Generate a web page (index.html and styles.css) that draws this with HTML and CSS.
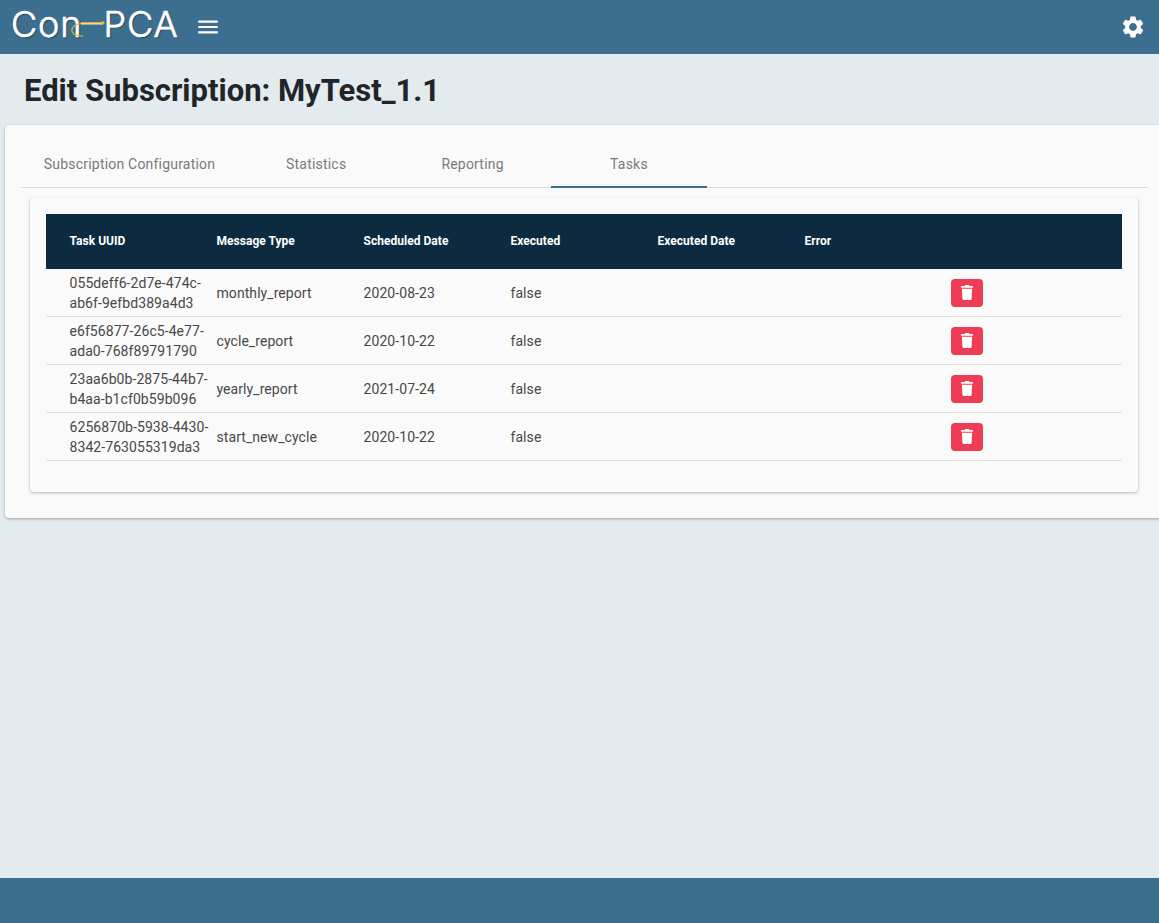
FILE: index.html
```html
<!DOCTYPE html>
<html lang="en">
<head>
    <meta charset="UTF-8">
    <meta name="viewport" content="width=device-width, initial-scale=1.0">
    <title>Edit Subscription</title>
    <link rel="stylesheet" href="styles.css">
</head>
<body>
    <header class="topbar">
        <div class="logo">
            <span class="logo-text">Con</span>
            <svg class="logo-link" width="36" height="36" viewBox="0 0 36 36" aria-hidden="true">
                <path d="M11 14.5H33" stroke="#f4eecb" stroke-width="2" fill="none"/>
                <path d="M11 13.7H33" stroke="#e6b422" stroke-width="1.3" fill="none"/>
                <circle cx="33" cy="13.7" r="1.6" fill="#e6b422"/>
                <path d="M11 14.5C4 15 0 20 3 24C5 27 9 27 13 27" stroke="#e6b422" stroke-width="1.2" fill="none"/>
            </svg>
            <span class="logo-text">PCA</span>
        </div>
        <button class="icon-btn menu-btn" aria-label="Menu">
            <svg width="26" height="26" viewBox="0 0 24 24"><path d="M3 18h18v-2H3v2zm0-5h18v-2H3v2zm0-7v2h18V6H3z"/></svg>
        </button>
        <button class="icon-btn settings-btn" aria-label="Settings">
            <svg width="26" height="26" viewBox="0 0 24 24"><path d="M19.14 12.94c.04-.3.06-.61.06-.94s-.02-.64-.07-.94l2.03-1.58a.49.49 0 0 0 .12-.61l-1.92-3.32a.488.488 0 0 0-.59-.22l-2.39.96c-.5-.38-1.03-.7-1.62-.94l-.36-2.54a.484.484 0 0 0-.48-.41h-3.84c-.24 0-.43.17-.47.41l-.36 2.54c-.59.24-1.13.57-1.62.94l-2.39-.96a.48.48 0 0 0-.59.22L2.74 8.87c-.12.21-.08.47.12.61l2.03 1.58c-.05.3-.09.63-.09.94s.02.64.07.94l-2.03 1.58a.49.49 0 0 0-.12.61l1.92 3.32c.12.22.37.29.59.22l2.39-.96c.5.38 1.03.7 1.62.94l.36 2.54c.05.24.24.41.48.41h3.84c.24 0 .44-.17.47-.41l.36-2.54c.59-.24 1.13-.56 1.62-.94l2.39.96c.22.08.47 0 .59-.22l1.92-3.32c.12-.22.07-.47-.12-.61l-2.01-1.58zM12 15.6c-1.98 0-3.6-1.62-3.6-3.6s1.62-3.6 3.6-3.6 3.6 1.62 3.6 3.6-1.62 3.6-3.6 3.6z"/></svg>
        </button>
    </header>

    <main class="content">
        <h1 class="page-title">Edit Subscription: MyTest_1.1</h1>

        <section class="card outer-card">
            <nav class="tabs">
                <div class="tab tab-wide">Subscription Configuration</div>
                <div class="tab">Statistics</div>
                <div class="tab">Reporting</div>
                <div class="tab tab-active">Tasks</div>
            </nav>

            <div class="card inner-card">
                <table class="task-table">
                    <thead>
                        <tr>
                            <th>Task UUID</th>
                            <th>Message Type</th>
                            <th>Scheduled Date</th>
                            <th>Executed</th>
                            <th>Executed Date</th>
                            <th>Error</th>
                            <th class="col-action"></th>
                        </tr>
                    </thead>
                    <tbody>
                        <tr>
                            <td><div class="uuid">055deff6-2d7e-474c-ab6f-9efbd389a4d3</div></td>
                            <td>monthly_report</td>
                            <td>2020-08-23</td>
                            <td>false</td>
                            <td></td>
                            <td></td>
                            <td class="col-action"><button class="delete-btn" aria-label="Delete"><svg width="12" height="15" viewBox="0 0 448 512" preserveAspectRatio="none"><path d="M432 32H312l-9.4-18.7A24 24 0 0 0 281.1 0H166.8a23.72 23.72 0 0 0-21.4 13.3L136 32H16A16 16 0 0 0 0 48v32a16 16 0 0 0 16 16h416a16 16 0 0 0 16-16V48a16 16 0 0 0-16-16zM53.2 467a48 48 0 0 0 47.9 45h245.8a48 48 0 0 0 47.9-45L416 128H32z"/></svg></button></td>
                        </tr>
                        <tr>
                            <td><div class="uuid">e6f56877-26c5-4e77-ada0-768f89791790</div></td>
                            <td>cycle_report</td>
                            <td>2020-10-22</td>
                            <td>false</td>
                            <td></td>
                            <td></td>
                            <td class="col-action"><button class="delete-btn" aria-label="Delete"><svg width="12" height="15" viewBox="0 0 448 512" preserveAspectRatio="none"><path d="M432 32H312l-9.4-18.7A24 24 0 0 0 281.1 0H166.8a23.72 23.72 0 0 0-21.4 13.3L136 32H16A16 16 0 0 0 0 48v32a16 16 0 0 0 16 16h416a16 16 0 0 0 16-16V48a16 16 0 0 0-16-16zM53.2 467a48 48 0 0 0 47.9 45h245.8a48 48 0 0 0 47.9-45L416 128H32z"/></svg></button></td>
                        </tr>
                        <tr>
                            <td><div class="uuid">23aa6b0b-2875-44b7-b4aa-b1cf0b59b096</div></td>
                            <td>yearly_report</td>
                            <td>2021-07-24</td>
                            <td>false</td>
                            <td></td>
                            <td></td>
                            <td class="col-action"><button class="delete-btn" aria-label="Delete"><svg width="12" height="15" viewBox="0 0 448 512" preserveAspectRatio="none"><path d="M432 32H312l-9.4-18.7A24 24 0 0 0 281.1 0H166.8a23.72 23.72 0 0 0-21.4 13.3L136 32H16A16 16 0 0 0 0 48v32a16 16 0 0 0 16 16h416a16 16 0 0 0 16-16V48a16 16 0 0 0-16-16zM53.2 467a48 48 0 0 0 47.9 45h245.8a48 48 0 0 0 47.9-45L416 128H32z"/></svg></button></td>
                        </tr>
                        <tr>
                            <td><div class="uuid">6256870b-5938-4430-8342-763055319da3</div></td>
                            <td>start_new_cycle</td>
                            <td>2020-10-22</td>
                            <td>false</td>
                            <td></td>
                            <td></td>
                            <td class="col-action"><button class="delete-btn" aria-label="Delete"><svg width="12" height="15" viewBox="0 0 448 512" preserveAspectRatio="none"><path d="M432 32H312l-9.4-18.7A24 24 0 0 0 281.1 0H166.8a23.72 23.72 0 0 0-21.4 13.3L136 32H16A16 16 0 0 0 0 48v32a16 16 0 0 0 16 16h416a16 16 0 0 0 16-16V48a16 16 0 0 0-16-16zM53.2 467a48 48 0 0 0 47.9 45h245.8a48 48 0 0 0 47.9-45L416 128H32z"/></svg></button></td>
                        </tr>
                    </tbody>
                </table>
            </div>
        </section>
    </main>

    <footer class="footer"></footer>
</body>
</html>
```

FILE: styles.css
```css
html, body {
    height: 100%;
}

body {
    margin: 0;
    display: flex;
    flex-direction: column;
    min-height: 100vh;
    overflow: hidden;
    font-family: Roboto, "Liberation Sans", sans-serif;
    color: #484848;
    background-color: #e3ebee;
}

.topbar {
    flex: 0 0 54px;
    display: flex;
    align-items: center;
    padding: 0 13px 0 11px;
    background-color: #3c6e8f;
}

.logo {
    display: flex;
    align-items: center;
    height: 54px;
}

.logo-text {
    font-family: Inter, sans-serif;
    font-weight: 300;
    font-size: 36px;
    line-height: 48px;
    margin-bottom: 6px;
    color: #fff;
    letter-spacing: 0.9px;
    -webkit-text-stroke: 0.7px #fff;
    text-shadow: 1px 1px 1px rgba(0, 0, 0, 0.5);
}

.logo-link {
    margin: 0 -3px 0 -12px;
}

.icon-btn {
    display: flex;
    padding: 0;
    border: none;
    background: none;
    cursor: pointer;
    fill: #fff;
}

.menu-btn {
    margin-left: 16px;
}

.settings-btn {
    margin-left: auto;
}

.content {
    flex: 1;
}

.page-title {
    margin: 0;
    padding: 18px 24px 16px;
    font-size: 31px;
    line-height: 37px;
    font-weight: 700;
    color: #212529;
}

.card {
    background-color: #fafafa;
    border-radius: 4px;
    box-shadow: 0 1px 3px rgba(0, 0, 0, 0.3);
}

.outer-card {
    margin: 0 -5px 0 5px;
    padding: 16px 16px 26px;
}

.tabs {
    display: flex;
    height: 46px;
    border-bottom: 1px solid #dcdcdc;
}

.tab {
    box-sizing: border-box;
    width: 156.4px;
    height: 47px;
    line-height: 47px;
    text-align: center;
    font-size: 14px;
    font-weight: 400;
    letter-spacing: 0.2px;
    color: #7a7a7a;
}

.tab-wide {
    width: 217px;
}

.tab-active {
    border-bottom: 2px solid #3c6e8f;
}

.inner-card {
    margin: 10px 10px 0 9px;
    padding: 16px 16px 31px;
}

.task-table {
    width: 100%;
    table-layout: fixed;
    border-collapse: separate;
    border-spacing: 0;
    font-size: 14px;
}

.task-table th {
    width: 147px;
    height: 55px;
    box-sizing: border-box;
    padding: 0 0 2px 23.5px;
    text-align: left;
    font-size: 12px;
    font-weight: 700;
    letter-spacing: 0.03px;
    color: #fff;
    background-color: #0d2b40;
}

.task-table td {
    height: 48px;
    box-sizing: border-box;
    padding: 0 0 0 23.5px;
    line-height: 20px;
    letter-spacing: 0.07px;
    border-bottom: 1px solid #dedede;
    color: #484848;
}

.uuid {
    width: 142px;
}

.task-table .col-action {
    width: auto;
    padding-left: 23px;
}

.delete-btn {
    display: flex;
    align-items: center;
    justify-content: center;
    width: 32px;
    height: 28px;
    padding: 0;
    border: none;
    border-radius: 4px;
    background-color: #ef3b53;
    fill: #fff;
    cursor: pointer;
}

.footer {
    flex: 0 0 45px;
    background-color: #3c6e8f;
}
```
